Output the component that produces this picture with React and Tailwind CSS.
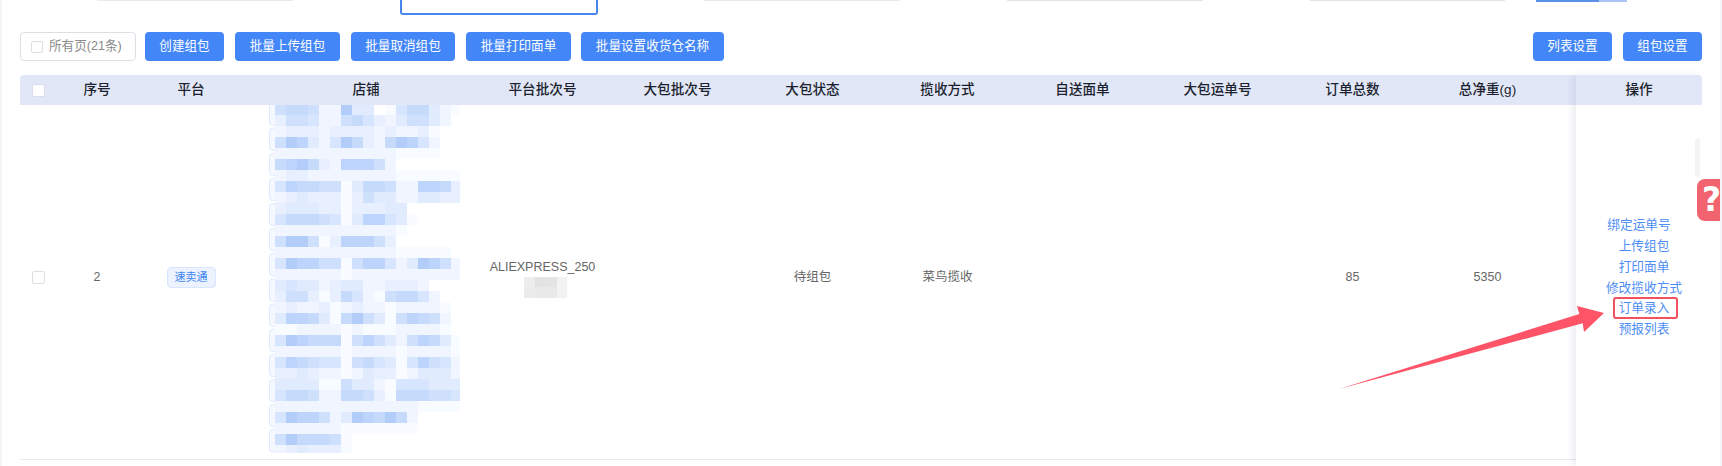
// App.jsx
// Batch package list: cut-off filter row, toolbar, table with one row and a fixed action column.
import React from 'react'

const BLUES = ['#ffffff', '#f8fbff', '#f0f5ff', '#e8f0ff', '#e0ebfe', '#d8e5fe', '#cfe0fd', '#c6dafc', '#bdd4fc', '#b3cdfb']

// Pixelated shop names, one string per 11px row, one digit per 11px cell
const MOSAIC = [
  '67762294401577421',
  '36652267532466420',
  '23332333323223100',
  '69842597327985200',
  '22222222222111100',
  '78973288862000000',
  '23322222222111111',
  '58776614776228873',
  '23433313644224433',
  '34443313334400000',
  '57776514885410000',
  '22222222222100000',
  '69961388863000000',
  '22222222222111110',
  '59886616885249862',
  '22222212222222222',
  '45442344223332000',
  '36631375216775200',
  '23223123221222210',
  '48874179641687620',
  '11222212111222210',
  '59877716864268741',
  '22222212222122221',
  '58765516754158652',
  '33432212433124442',
  '44441164421555444',
  '57762277631777665',
  '22222222222221111',
  '59886249879720000',
  '22222211111110000',
  '69777610000000000',
  '23433310000000000',
]

const TAG_TOPS = Array.from({ length: 14 }, (_, i) => 103 + i * 25.15)

const TOOLBAR = ['创建组包', '批量上传组包', '批量取消组包', '批量打印面单', '批量设置收货仓名称']

// widths taken from the header text centres
const COLS = [
  ['w-[49px]', ''],
  ['w-[56px]', '序号'],
  ['w-[132px]', '平台'],
  ['w-[218px]', '店铺'],
  ['w-[135px]', '平台批次号'],
  ['w-[135px]', '大包批次号'],
  ['w-[135px]', '大包状态'],
  ['w-[135px]', '揽收方式'],
  ['w-[135px]', '自送面单'],
  ['w-[135px]', '大包运单号'],
  ['w-[135px]', '订单总数'],
  ['w-[135px]', '总净重(g)'],
]

const ACTIONS = ['绑定运单号', '上传组包', '打印面单', '修改揽收方式', '订单录入', '预报列表']

function Btn({ children, className = '' }) {
  return (
    <button className={`h-[29px] rounded-[4px] bg-[#4386f8] text-[12.6px] text-white ${className}`}>
      {children}
    </button>
  )
}

function ShopMosaic() {
  return (
    <svg width="191" height="349" viewBox="269 105 191 349" className="block blur-[0.5px]">
      {TAG_TOPS.map(y => (
        <rect key={y} x="269.5" y={y} width="30" height="22" rx="3" fill="#f5f8ff" stroke="#dfe9fd" />
      ))}
      {MOSAIC.map((row, r) =>
        row.split('').map((c, i) =>
          c === '0' ? null : (
            <rect key={`${r}-${i}`} x={275 + i * 11} y={104 + r * 11} width="11" height={r === 31 ? 8 : 11} fill={BLUES[+c]} />
          )
        )
      )}
    </svg>
  )
}

function BlurredBatch() {
  return (
    <svg width="43" height="21" className="block ml-[49px]">
      {['#ededed', '#e3e3e3', '#e4e4e4', '#f2f2f2'].map((f, i) => (
        <rect key={f} x={i === 3 ? 33 : i * 11} y="0" width={i === 3 ? 10 : 11} height="10" fill={f} />
      ))}
      {['#ebebeb', '#e9e9e9', '#e9e9e9', '#f2f2f2'].map((f, i) => (
        <rect key={i} x={i === 3 ? 33 : i * 11} y="10" width={i === 3 ? 10 : 11} height="11" fill={f} />
      ))}
    </svg>
  )
}

function CellText({ width, children }) {
  return <div className={`${width} shrink-0 flex items-center justify-center pb-[10px]`}>{children}</div>
}

export default function App() {
  return (
    <div className="relative w-[1722px] h-[466px] overflow-hidden bg-white border-x-2 border-[#f4f5f9] [font-family:'Liberation_Sans','Noto_Sans_CJK_SC',sans-serif]">

      {/* Bottom edges of the filter row, scrolled off the top */}
      <div className="flex items-start h-[15px] pl-[95px]">
        <div className="w-[196px] h-px bg-[#e9e9ef]" />
        <div className="w-[198px] h-[15px] ml-[107px] border-2 border-t-0 border-[#4a86f0] rounded-b-[3px]" />
        <div className="w-[196px] h-px ml-[106px] bg-[#e9e9ef]" />
        <div className="w-[196px] h-px ml-[107px] bg-[#e4e4e8]" />
        <div className="w-[195px] h-px ml-[107px] bg-[#e4e4e8]" />
        <div className="w-[63px] h-[2px] ml-[31px] bg-[#5c8fe6]" />
        <div className="w-[28px] h-[2px] bg-[#a9c4f5]" />
      </div>

      {/* Toolbar */}
      <div className="flex items-center justify-between mt-[17px] pl-[18px] pr-[18px]">
        <div className="flex items-center gap-[11px]">
          <label className="flex items-center w-[116px] h-[29px] pl-[10px] border border-[#dcdfe6] rounded-[4px] text-[12.6px] text-[#8a8a8a]">
            <span className="w-[12px] h-[12px] mr-[6px] border border-[#dcdfe6] rounded-[2px]" />
            所有页(21条)
          </label>
          <Btn className="w-[79px] ml-[-2px]">{TOOLBAR[0]}</Btn>
          <Btn className="w-[105px]">{TOOLBAR[1]}</Btn>
          <Btn className="w-[104px]">{TOOLBAR[2]}</Btn>
          <Btn className="w-[105px]">{TOOLBAR[3]}</Btn>
          <Btn className="w-[143px] ml-[-1px]">{TOOLBAR[4]}</Btn>
        </div>
        <div className="flex items-center gap-[11px]">
          <Btn className="w-[79px]">列表设置</Btn>
          <Btn className="w-[79px]">组包设置</Btn>
        </div>
      </div>

      {/* Table */}
      <div className="flex items-stretch mt-[14px] ml-[18px] w-[1682px] h-[391px]">
        <div className="w-[1556px] shrink-0">
          <div className="flex h-[30px] items-center bg-[#e1e7f7] rounded-tl-[4px] text-[13.6px] font-medium text-[#1c1f2e]">
            {COLS.map(([w, label], i) => (
              <div key={i} className={`${w} shrink-0 text-center`}>
                {i === 0 ? <span className="block w-[13px] h-[13px] ml-[12px] bg-white border border-[#d8deee] rounded-[2px]" /> : label}
              </div>
            ))}
          </div>
          <div className="flex h-[355px] border-b border-[#e9eaf0] text-[12.5px] text-[#666666]">
            <CellText width="w-[49px]">
              <span className="w-[13px] h-[13px] mr-[13px] border border-[#dcdfe6] rounded-[2px]" />
            </CellText>
            <CellText width="w-[56px]">2</CellText>
            <CellText width="w-[132px]">
              <span className="flex items-center justify-center w-[49px] h-[21px] rounded-[4px] bg-[#ecf3ff] border border-[#d9e6ff] text-[11px] text-[#4285f4]">速卖通</span>
            </CellText>
            <div className="w-[218px] shrink-0 pl-[12px]">
              <ShopMosaic />
            </div>
            <div className="w-[135px] shrink-0 flex flex-col justify-center pb-[10px]">
              <div className="text-center leading-[20px]">ALIEXPRESS_250</div>
              <BlurredBatch />
            </div>
            <CellText width="w-[135px]" />
            <CellText width="w-[135px]">待组包</CellText>
            <CellText width="w-[135px]">菜鸟揽收</CellText>
            <CellText width="w-[135px]" />
            <CellText width="w-[135px]" />
            <CellText width="w-[135px]">85</CellText>
            <CellText width="w-[135px]">5350</CellText>
          </div>
        </div>

        {/* Fixed action column */}
        <div className="w-[126px] shrink-0 bg-white shadow-[-4px_0_6px_rgba(40,50,90,0.08)]">
          <div className="flex items-center justify-center h-[30px] bg-[#e1e7f7] rounded-tr-[4px] text-[13.6px] font-medium text-[#1c1f2e]">操作</div>
          <div className="flex flex-col items-center justify-center h-[345px] text-[12.7px] leading-[20.7px] text-[#4f8ef5]">
            {ACTIONS.map((a, i) => (
              <a key={a} className={i === 0 ? '' : 'pl-[10px]'}>{a}</a>
            ))}
          </div>
        </div>
      </div>

      {/* Scrollbar thumb and help tab */}
      <div className="absolute left-[1693px] top-[138px] w-[5px] h-[39px] rounded-full bg-[#f3f4f4]" />
      <div className="absolute left-[1695px] top-[179px] w-[25px] h-[42px] overflow-hidden rounded-l-[8px] bg-[#f0636f] pl-[5px] text-[33px] leading-[42px] font-bold text-white [font-family:'DejaVu_Sans',sans-serif]">?</div>

      {/* Red annotation: box round 订单录入 and the arrow pointing at it */}
      <div className="absolute left-[1611px] top-[297px] w-[65px] h-[22px] border-2 border-[#f5505f] rounded-[3px]" />
      <svg className="absolute left-[-2px] top-0 pointer-events-none" width="1722" height="466">
        <polygon points="1339,389 1579.3,314 1577,306 1604,313 1584,332 1582.7,323.3" fill="#ff5468" />
      </svg>
    </div>
  )
}
